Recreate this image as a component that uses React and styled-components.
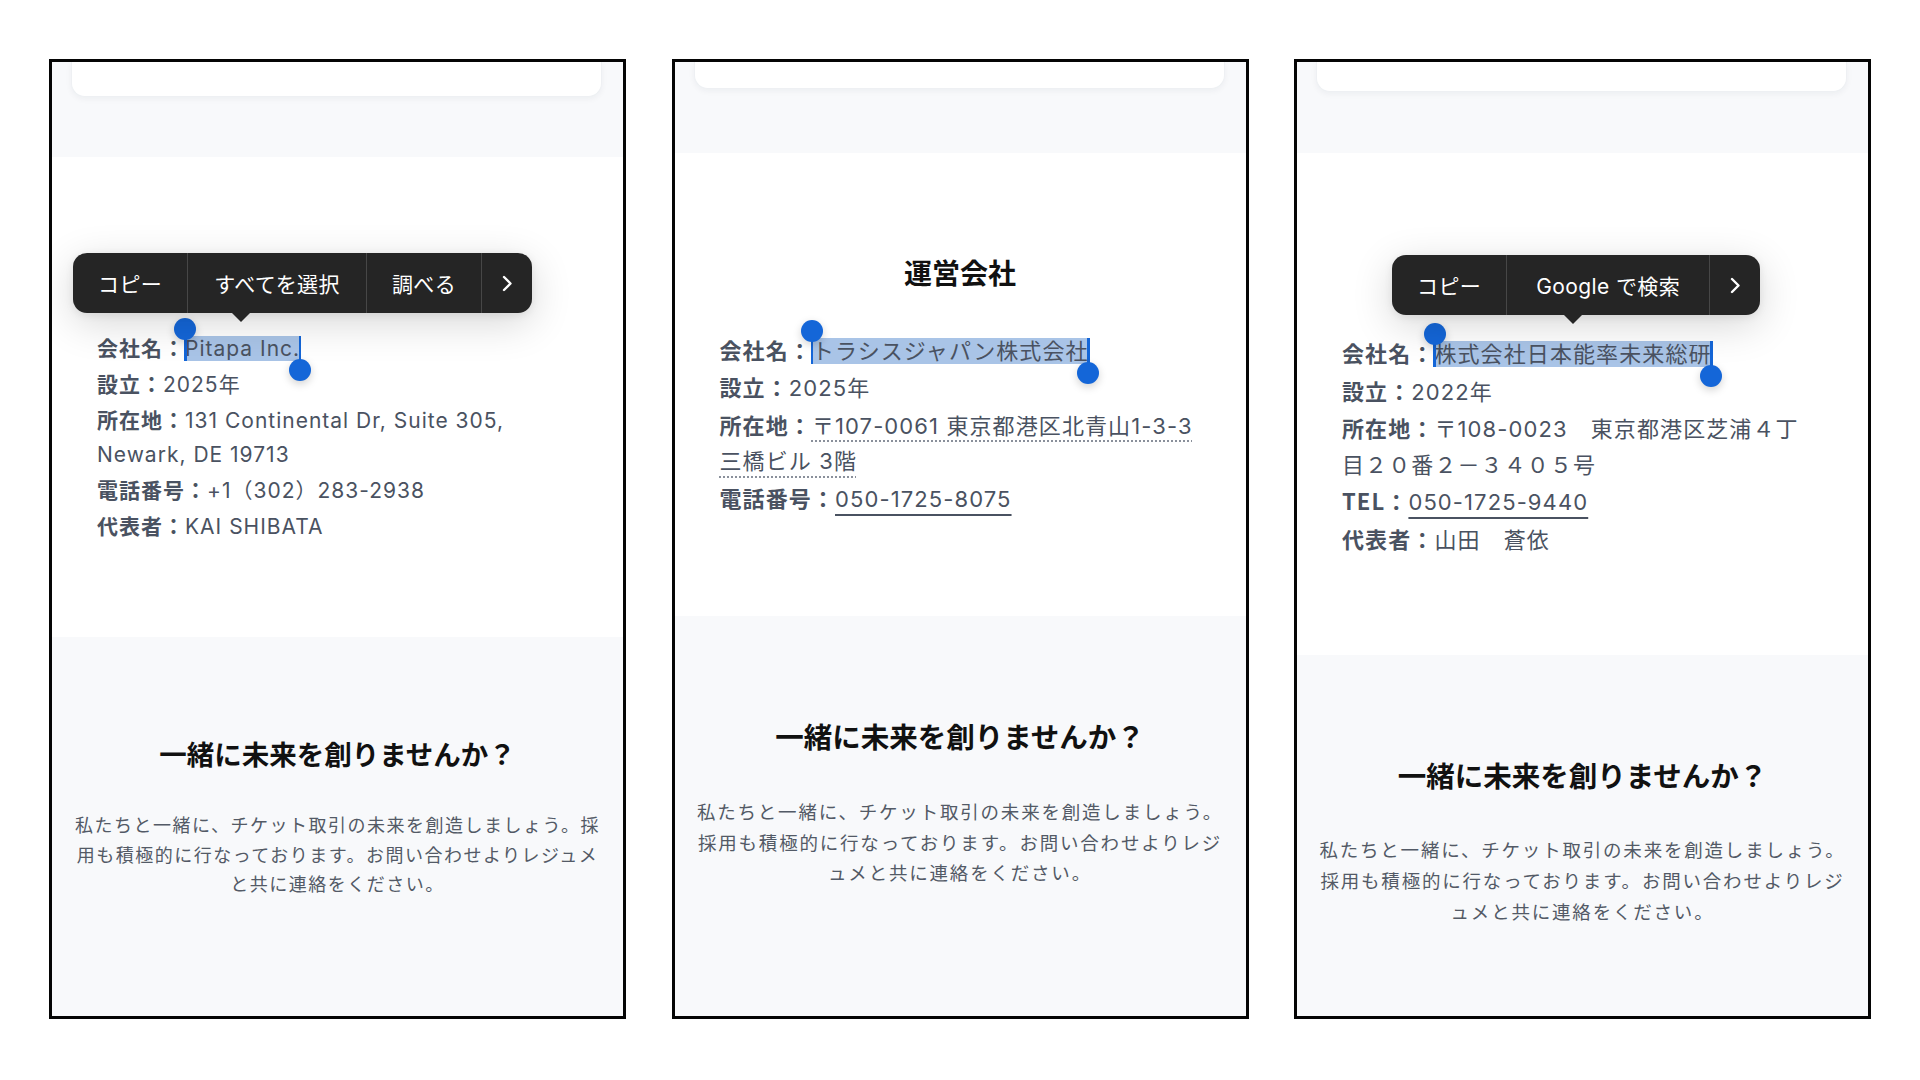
import React from "react";
import styled, { createGlobalStyle } from "styled-components";

const Global = createGlobalStyle`
  html, body { margin: 0; padding: 0; background: #ffffff; }
  body { font-family: Inter, "Noto Sans CJK JP", sans-serif; }
  * { box-sizing: border-box; }
`;

const Stage = styled.main`
  width: 1920px;
  height: 1080px;
  padding: 59px 49px 0;
  display: flex;
  gap: 45.5px;
  background: #fff;
`;

const Shot = styled.section`
  width: 577px;
  height: 960px;
  flex: 0 0 577px;
  border: 3px solid #050505;
  display: flex;
  flex-direction: column;
  overflow: hidden;
  background: #f8f9fb;
`;

const TopArea = styled.div`
  flex: 0 0 ${(p) => p.$h}px;
  background: #f8f9fb;
  padding: 0 21px 0 19px;
`;

const TopCard = styled.div`
  height: ${(p) => p.$h}px;
  background: #ffffff;
  border: 1px solid #eef0f3;
  border-top: none;
  border-radius: 0 0 14px 14px;
  box-shadow: 0 2px 6px rgba(20, 30, 50, 0.05);
`;

const InfoSection = styled.div`
  position: relative;
  flex: 0 0 ${(p) => p.$h}px;
  background: #ffffff;
  padding: ${(p) => p.$pt}px 45px 0;
  display: flex;
  flex-direction: column;
`;

const SectionTitle = styled.h2`
  margin: 0 0 ${(p) => p.$gap}px;
  font-family: "Noto Sans CJK JP", sans-serif;
  font-size: 28px;
  line-height: 40px;
  font-weight: 700;
  color: #111;
  text-align: center;
`;

const InfoList = styled.div`
  font-family: Inter, "Noto Sans CJK JP", sans-serif;
  font-size: ${(p) => p.$fs}px;
  line-height: ${(p) => p.$lh}px;
  letter-spacing: ${(p) => p.$ls}px;
  color: #4a5261;
  white-space: nowrap;
`;

const InfoRow = styled.div``;

const Label = styled.span`
  font-weight: 700;
  font-family: "Noto Sans CJK JP", sans-serif;
`;

const LinkText = styled.span`
  text-decoration-line: underline;
  text-decoration-style: ${(p) => (p.$dotted ? "dotted" : "solid")};
  text-decoration-thickness: ${(p) => (p.$dotted ? "2px" : "1.5px")};
  text-decoration-color: ${(p) => (p.$dotted ? "#8a909b" : "#4a5261")};
  text-underline-offset: 7px;
`;

const Selected = styled.span`
  position: relative;
  background: #a9c4e7;
`;

const Caret = styled.span`
  position: absolute;
  top: ${(p) => (p.$end ? "0" : "-6px")};
  bottom: ${(p) => (p.$end ? "-6px" : "0")};
  ${(p) => (p.$end ? "right: -1px;" : "left: -1px;")}
  width: 2.5px;
  background: #1466d8;
  &::after {
    content: "";
    position: absolute;
    left: 50%;
    ${(p) => (p.$end ? "bottom: -14px;" : "top: -12px;")}
    width: 22px;
    height: 22px;
    margin-left: -11px;
    border-radius: 50%;
    background: #1466d8;
    box-shadow: 0 3px 8px rgba(0, 0, 0, 0.18);
  }
`;

const Menu = styled.div`
  position: absolute;
  top: ${(p) => p.$top}px;
  left: ${(p) => p.$left}px;
  height: 60px;
  display: flex;
  align-items: stretch;
  background: #252525;
  border-radius: 14px;
  box-shadow: 0 10px 40px rgba(0, 0, 0, 0.16), 0 2px 8px rgba(0, 0, 0, 0.08);
  z-index: 2;
  &::after {
    content: "";
    position: absolute;
    top: 60px;
    left: ${(p) => p.$arrow - 9}px;
    border-left: 9px solid transparent;
    border-right: 9px solid transparent;
    border-top: 9px solid #252525;
  }
`;

const MenuItem = styled.div`
  display: flex;
  align-items: center;
  justify-content: center;
  padding: 0 ${(p) => p.$pad || 25}px;
  color: #ffffff;
  font-family: Inter, "Noto Sans CJK JP", sans-serif;
  font-size: 21px;
  letter-spacing: 0.4px;
  white-space: nowrap;
  & + & {
    border-left: 1px solid #474747;
  }
`;

const Footer = styled.div`
  flex: 1 1 auto;
  background: #f8f9fb;
  padding: ${(p) => p.$pt}px 20px 0;
  text-align: center;
`;

const FooterTitle = styled.h3`
  margin: 0 0 ${(p) => p.$gap}px;
  font-family: "Noto Sans CJK JP", sans-serif;
  font-size: ${(p) => p.$fs}px;
  line-height: 40px;
  font-weight: 700;
  color: #111;
`;

const FooterText = styled.p`
  margin: 0;
  font-family: "Noto Sans CJK JP", sans-serif;
  font-size: ${(p) => p.$fs}px;
  letter-spacing: ${(p) => p.$ls}px;
  line-height: ${(p) => p.$lh}px;
  color: #535a66;
  white-space: nowrap;
`;

const Chevron = () => (
  <svg width="10" height="17" viewBox="0 0 10 17" fill="none">
    <path d="M2 2l6.5 6.5L2 15" stroke="#fff" strokeWidth="2.4" strokeLinecap="round" strokeLinejoin="round" />
  </svg>
);

const Selection = ({ children }) => (
  <Selected>
    <Caret />
    {children}
    <Caret $end />
  </Selected>
);

const Popup = ({ top, left, arrow, items }) => (
  <Menu $top={top} $left={left} $arrow={arrow}>
    {items.map((it, i) => (
      <MenuItem key={i} $pad={it.pad}>{it.label}</MenuItem>
    ))}
    <MenuItem $pad={20}>
      <Chevron />
    </MenuItem>
  </Menu>
);

const CtaFooter = ({ pt, titleSize, gap, fs, ls, lh, lines }) => (
  <Footer $pt={pt}>
    <FooterTitle $fs={titleSize} $gap={gap}>一緒に未来を創りませんか？</FooterTitle>
    <FooterText $fs={fs} $ls={ls} $lh={lh}>
      {lines.map((l, i) => (
        <React.Fragment key={i}>
          {l}
          {i < lines.length - 1 && <br />}
        </React.Fragment>
      ))}
    </FooterText>
  </Footer>
);

export default function App() {
  return (
    <>
      <Global />
      <Stage>
        <Shot>
          <TopArea $h={95}>
            <TopCard $h={35} />
          </TopArea>
          <InfoSection $h={480} $pt={173}>
            <Popup
              top={96}
              left={21}
              arrow={168}
              items={[{ label: "コピー" }, { label: "すべてを選択", pad: 26 }, { label: "調べる" }]}
            />
            <InfoList $fs={21} $lh={34} $ls={1}>
              <InfoRow>
                <Label>会社名：</Label>
                <Selection>Pitapa Inc.</Selection>
              </InfoRow>
              <InfoRow>
                <Label>設立：</Label>2025年
              </InfoRow>
              <InfoRow>
                <Label>所在地：</Label>131 Continental Dr, Suite 305,
                <br />
                Newark, DE 19713
              </InfoRow>
              <InfoRow>
                <Label>電話番号：</Label>+1（302）283-2938
              </InfoRow>
              <InfoRow>
                <Label>代表者：</Label>KAI SHIBATA
              </InfoRow>
            </InfoList>
          </InfoSection>
          <CtaFooter
            pt={96}
            titleSize={27.5}
            gap={37}
            fs={18}
            ls={1.5}
            lh={29.5}
            lines={[
              "私たちと一緒に、チケット取引の未来を創造しましょう。採",
              "用も積極的に行なっております。お問い合わせよりレジュメ",
              "と共に連絡をください。",
            ]}
          />
        </Shot>

        <Shot>
          <TopArea $h={91}>
            <TopCard $h={27} />
          </TopArea>
          <InfoSection $h={463} $pt={99}>
            <SectionTitle $gap={39.5}>運営会社</SectionTitle>
            <InfoList $fs={22} $lh={35.6} $ls={1.1}>
              <InfoRow>
                <Label>会社名：</Label>
                <Selection>トラシスジャパン株式会社</Selection>
              </InfoRow>
              <InfoRow>
                <Label>設立：</Label>2025年
              </InfoRow>
              <InfoRow>
                <Label>所在地：</Label>
                <LinkText $dotted>
                  〒107-0061 東京都港区北青山1-3-3
                  <br />
                  三橋ビル 3階
                </LinkText>
              </InfoRow>
              <InfoRow>
                <Label>電話番号：</Label>
                <LinkText>050-1725-8075</LinkText>
              </InfoRow>
            </InfoList>
          </InfoSection>
          <CtaFooter
            pt={100}
            titleSize={28.5}
            gap={40}
            fs={18.5}
            ls={1.8}
            lh={30.5}
            lines={[
              "私たちと一緒に、チケット取引の未来を創造しましょう。",
              "採用も積極的に行なっております。お問い合わせよりレジ",
              "ュメと共に連絡をください。",
            ]}
          />
        </Shot>

        <Shot>
          <TopArea $h={91}>
            <TopCard $h={30} />
          </TopArea>
          <InfoSection $h={502} $pt={182}>
            <Popup
              top={102}
              left={95}
              arrow={181}
              items={[{ label: "コピー" }, { label: "Google で検索", pad: 29 }]}
            />
            <InfoList $fs={22} $lh={35.6} $ls={1.1}>
              <InfoRow>
                <Label>会社名：</Label>
                <Selection>株式会社日本能率未来総研</Selection>
              </InfoRow>
              <InfoRow>
                <Label>設立：</Label>2022年
              </InfoRow>
              <InfoRow>
                <Label>所在地：</Label>〒108-0023　東京都港区芝浦４丁
                <br />
                目２０番２－３４０５号
              </InfoRow>
              <InfoRow>
                <Label>TEL：</Label>
                <LinkText>050-1725-9440</LinkText>
              </InfoRow>
              <InfoRow>
                <Label>代表者：</Label>山田　蒼依
              </InfoRow>
            </InfoList>
          </InfoSection>
          <CtaFooter
            pt={100}
            titleSize={28.5}
            gap={38.5}
            fs={18.5}
            ls={1.8}
            lh={31}
            lines={[
              "私たちと一緒に、チケット取引の未来を創造しましょう。",
              "採用も積極的に行なっております。お問い合わせよりレジ",
              "ュメと共に連絡をください。",
            ]}
          />
        </Shot>
      </Stage>
    </>
  );
}
